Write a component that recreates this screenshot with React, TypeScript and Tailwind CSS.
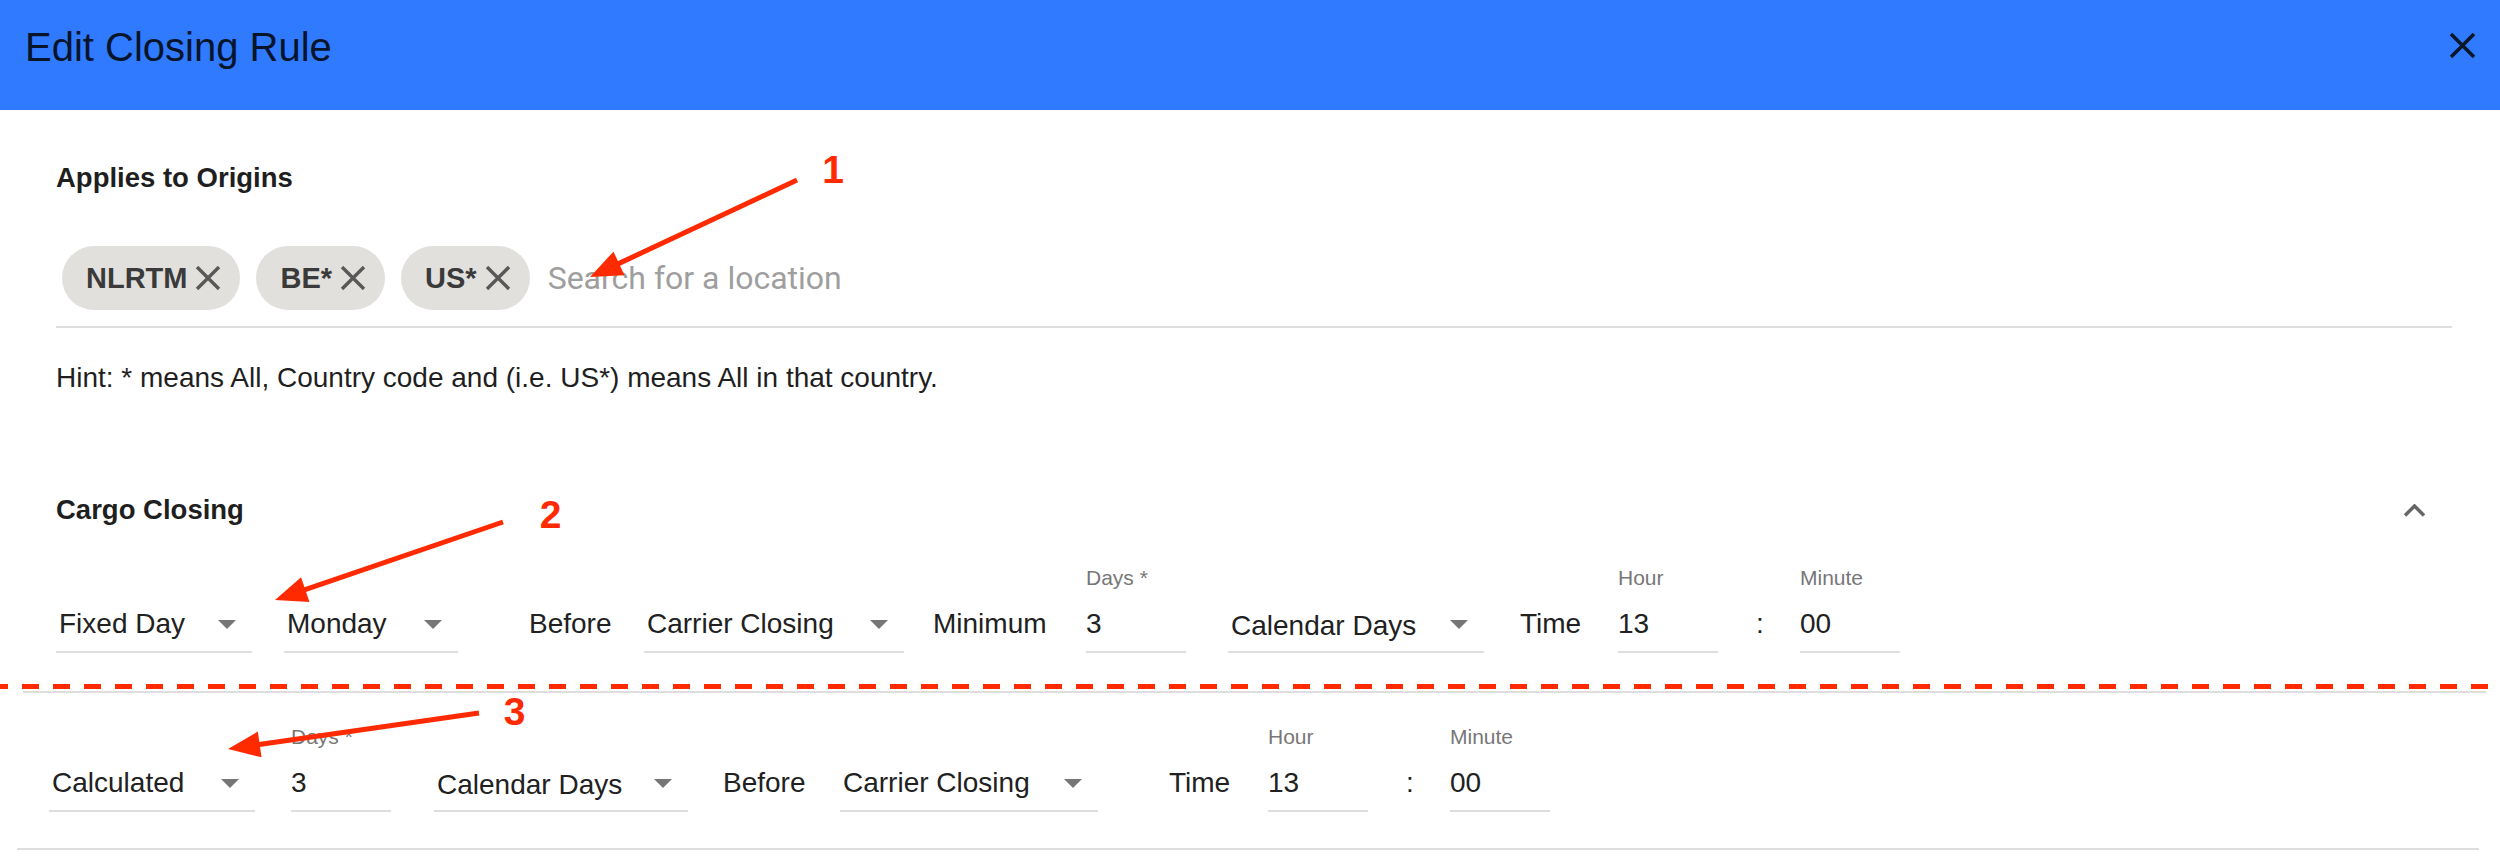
import React from 'react';

const RED = '#ff2a00';

const Caret = () => (
  <svg width="18" height="9" viewBox="0 0 18 9" className="shrink-0">
    <path d="M0 0h18L9 9z" fill="#767676" />
  </svg>
);

const ChipX = () => (
  <svg width="26" height="24" viewBox="0 0 26 24" className="shrink-0">
    <path d="M2 1L24 23M24 1L2 23" stroke="#585858" strokeWidth="3.4" fill="none" />
  </svg>
);

interface ChipProps {
  label: string;
}

const Chip: React.FC<ChipProps> = ({ label }) => (
  <div className="h-[64px] flex items-center gap-[8px] pl-[24px] pr-[19px] rounded-full bg-[#e2e0dd]">
    <span className="text-[29px] leading-[32px] font-bold text-[#3a3a3a]">{label}</span>
    <ChipX />
  </div>
);

interface SelectProps {
  value: string;
  className: string;
  lower?: boolean;
}

// underlined select, no floating label
const Select: React.FC<SelectProps> = ({ value, className, lower }) => (
  <div className={`flex items-center justify-between pl-[3px] pr-[16px] pb-[11px] border-b-2 border-[#dedede] ${className}`}>
    <span className={`text-[28px] leading-[32px] text-[#212121] whitespace-nowrap ${lower ? 'translate-y-[2px]' : ''}`}>
      {value}
    </span>
    <Caret />
  </div>
);

interface FieldProps {
  label: string;
  value: string;
  className: string;
}

const Field: React.FC<FieldProps> = ({ label, value, className }) => (
  <div className={`flex flex-col w-[100px] ${className}`}>
    <span className="text-[21px] leading-[24px] text-[#777777] whitespace-nowrap">{label}</span>
    <div className="mt-[18px] pb-[11px] border-b-2 border-[#dedede] text-[28px] leading-[32px] text-[#212121]">
      {value}
    </div>
  </div>
);

interface PlainProps {
  text: string;
  className: string;
}

const Plain: React.FC<PlainProps> = ({ text, className }) => (
  <span className={`pb-[13px] text-[28px] leading-[32px] text-[#212121] whitespace-nowrap ${className}`}>{text}</span>
);

// red annotation arrows drawn over the screenshot
const Arrow = ({ sx, sy, tx, ty }: { sx: number; sy: number; tx: number; ty: number }) => {
  const len = Math.hypot(tx - sx, ty - sy);
  const dx = (tx - sx) / len;
  const dy = (ty - sy) / len;
  const L = 32;
  const W = 13;
  const bx = tx - dx * L;
  const by = ty - dy * L;
  const nx = -dy;
  const ny = dx;
  return (
    <g>
      <line x1={sx} y1={sy} x2={bx + dx * 4} y2={by + dy * 4} stroke={RED} strokeWidth="5" />
      <polygon points={`${tx},${ty} ${bx + nx * W},${by + ny * W} ${bx - nx * W},${by - ny * W}`} fill={RED} />
    </g>
  );
};

const Annotations = () => (
  <svg className="absolute inset-0 pointer-events-none" width="2500" height="856" viewBox="0 0 2500 856">
    <line x1="0" y1="686.5" x2="2490" y2="686.5" stroke={RED} strokeWidth="5" strokeDasharray="17 14" strokeDashoffset="9" />
    <Arrow sx={797} sy={180} tx={590} ty={277} />
    <Arrow sx={503} sy={522} tx={275} ty={600} />
    <Arrow sx={479} sy={713} tx={228} ty={749} />
    <g fill={RED} fontFamily="'Liberation Sans', Arial, sans-serif" fontWeight="bold" fontSize="39" textAnchor="middle">
      <text x="833" y="183">1</text>
      <text x="550.5" y="528">2</text>
      <text x="514.5" y="725">3</text>
    </g>
  </svg>
);

export default function App() {
  return (
    <div className="relative w-[2500px] h-[856px] overflow-hidden bg-white font-['Liberation_Sans',Arial,sans-serif]">
      {/* Header */}
      <div className="h-[110px] bg-[#2f7aff] flex items-start justify-between pl-[25px] pr-[24px]">
        <h1 className="mt-[27px] text-[40px] leading-[40px] text-[#07142a]">Edit Closing Rule</h1>
        <svg width="27" height="27" viewBox="0 0 27 27" className="mt-[32px]">
          <path d="M2 2L25 25M25 2L2 25" stroke="#0b1628" strokeWidth="3.5" fill="none" />
        </svg>
      </div>

      {/* Origins + cargo closing */}
      <div className="pl-[56px] pr-[48px]">
        <div className="mt-[52px] text-[27.5px] leading-[32px] font-bold text-[#1f1f1f]">Applies to Origins</div>

        <div className="mt-[52px] pl-[6px] pb-[16px] border-b-2 border-[#dedede] flex items-center gap-[16px]">
          <Chip label="NLRTM" />
          <Chip label="BE*" />
          <Chip label="US*" />
          <input
            placeholder="Search for a location"
            className="ml-[2px] flex-1 bg-transparent outline-none text-[32px] leading-[36px] font-['Roboto',sans-serif] placeholder:text-[#9e9e9e]"
          />
        </div>

        <p className="mt-[34px] text-[28px] leading-[32px] text-[#1f1f1f]">
          Hint: * means All, Country code and (i.e. US*) means All in that country.
        </p>

        <div className="mt-[100px] flex items-center justify-between">
          <span className="text-[27.5px] leading-[32px] font-bold text-[#1f1f1f]">Cargo Closing</span>
          <svg width="23" height="13" viewBox="0 0 23 13" className="mr-[26px]">
            <polyline points="2,11.5 11.5,2 21,11.5" stroke="#666666" strokeWidth="3.5" fill="none" />
          </svg>
        </div>

        <div className="mt-[40px] flex items-end">
          <Select value="Fixed Day" className="w-[196px]" />
          <Select value="Monday" className="w-[174px] ml-[32px]" />
          <Plain text="Before" className="w-[81px] ml-[71px]" />
          <Select value="Carrier Closing" className="w-[260px] ml-[34px]" />
          <Plain text="Minimum" className="w-[112px] ml-[29px]" />
          <Field label="Days *" value="3" className="ml-[41px]" />
          <Select value="Calendar Days" className="w-[256px] ml-[42px]" lower />
          <Plain text="Time" className="w-[61px] ml-[36px]" />
          <Field label="Hour" value="13" className="ml-[37px]" />
          <Plain text=":" className="w-[8px] ml-[38px]" />
          <Field label="Minute" value="00" className="ml-[36px]" />
        </div>
      </div>

      <div className="mt-[38px] ml-[23px] mr-[14px] h-[2px] bg-[#dedede]" />

      {/* Calculated variant */}
      <div className="pl-[49px] mt-[32px] flex items-end">
        <Select value="Calculated" className="w-[206px]" />
        <Field label="Days *" value="3" className="ml-[36px]" />
        <Select value="Calendar Days" className="w-[254px] ml-[43px]" lower />
        <Plain text="Before" className="w-[81px] ml-[35px]" />
        <Select value="Carrier Closing" className="w-[258px] ml-[36px]" />
        <Plain text="Time" className="w-[61px] ml-[71px]" />
        <Field label="Hour" value="13" className="ml-[38px]" />
        <Plain text=":" className="w-[8px] ml-[38px]" />
        <Field label="Minute" value="00" className="ml-[36px]" />
      </div>

      <div className="mt-[36px] ml-[17px] mr-[21px] h-[2px] bg-[#dedede]" />

      <Annotations />
    </div>
  );
}
